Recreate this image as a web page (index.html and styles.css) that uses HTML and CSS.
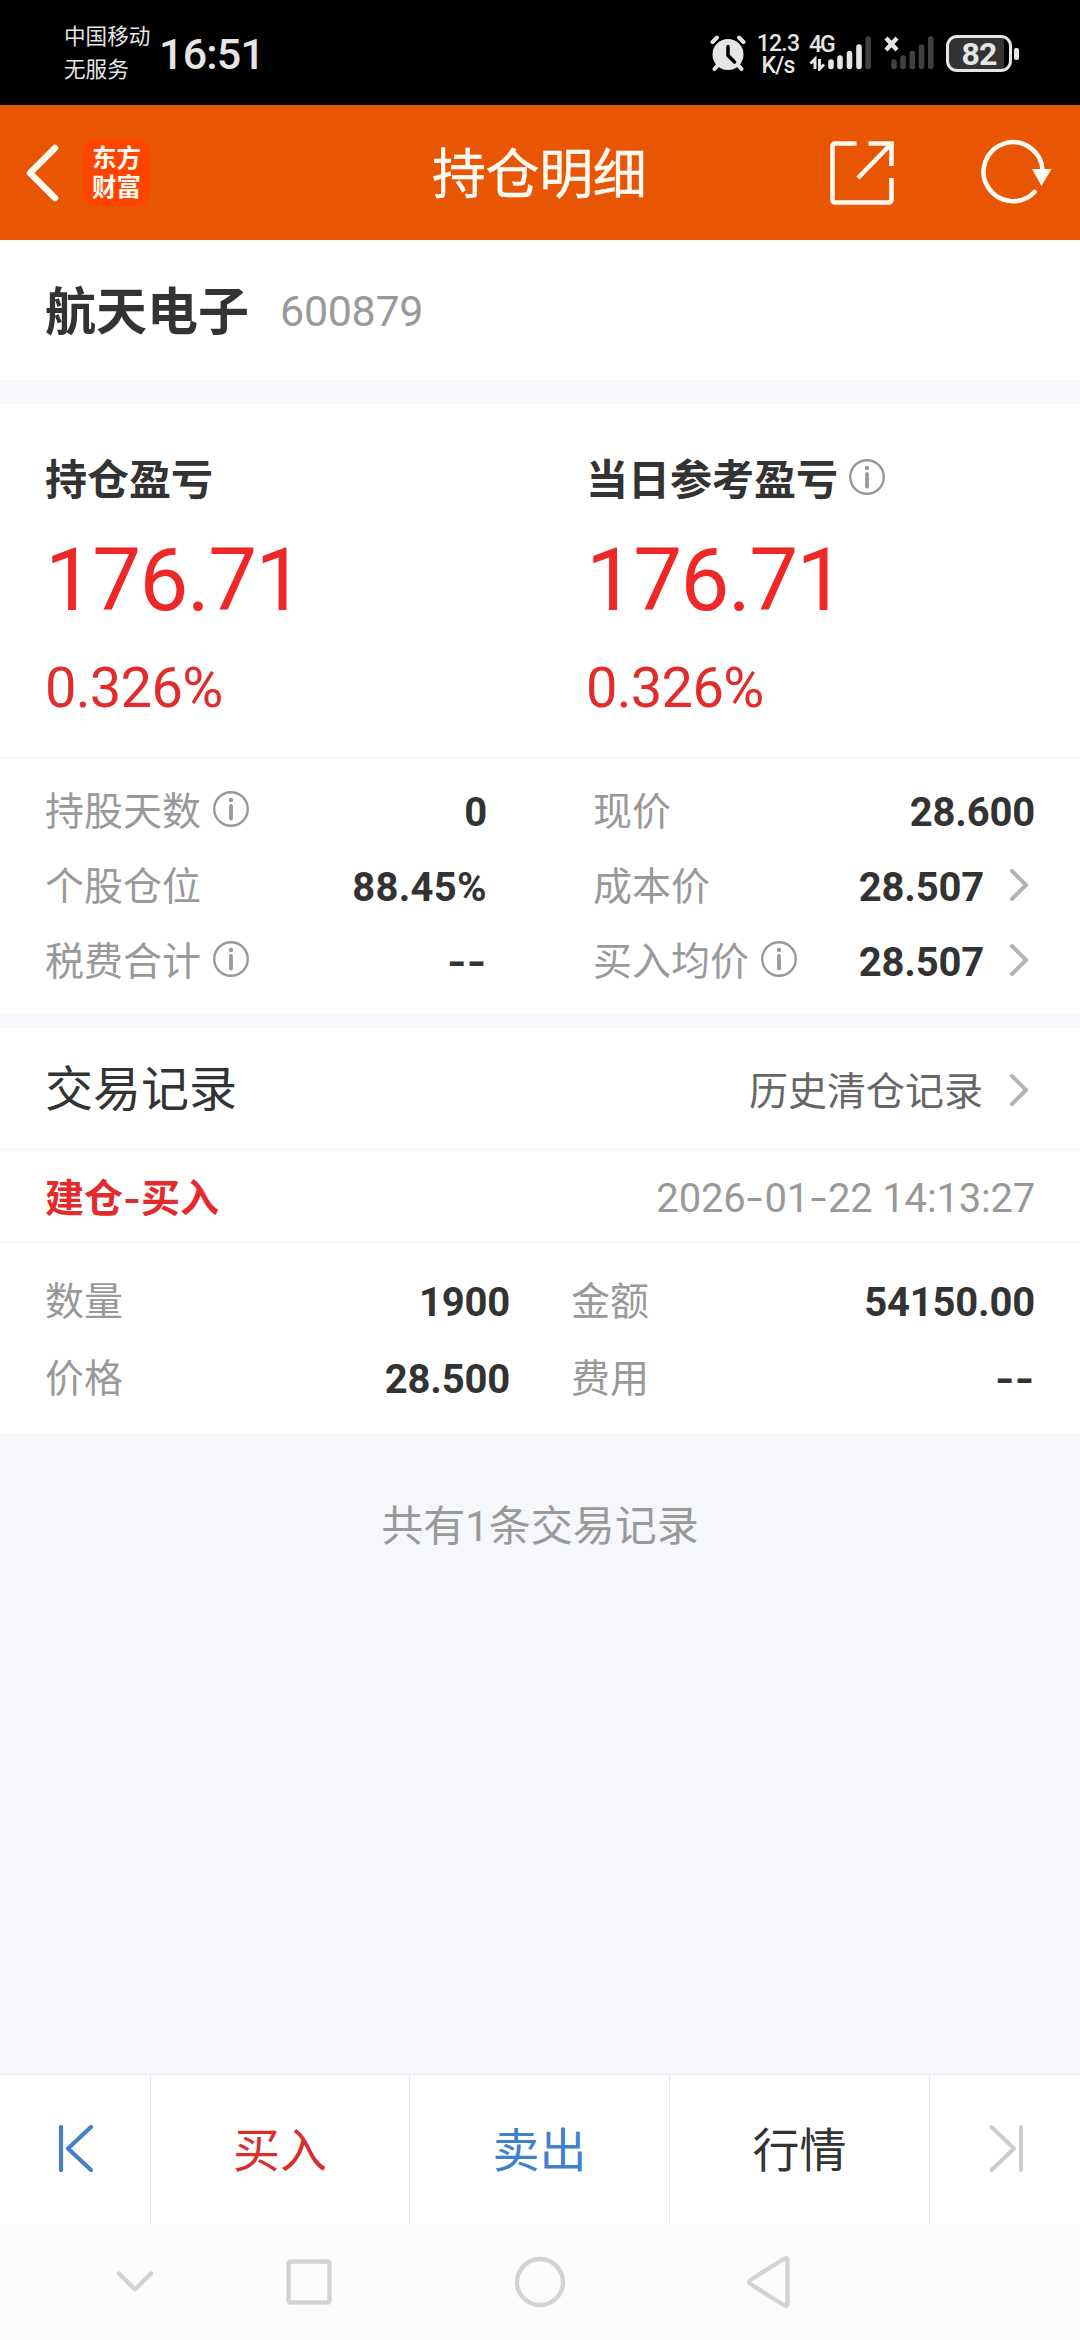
FILE: index.html
```html
<!DOCTYPE html>
<html lang="zh-CN">
<head>
<meta charset="utf-8">
<title>持仓明细</title>
<link rel="stylesheet" href="styles.css">
</head>
<body>
<svg class="defs" width="0" height="0" aria-hidden="true">
  <symbol id="info" viewBox="0 0 36 36"><circle cx="18" cy="18" r="16.8" fill="none" stroke="#999" stroke-width="2.4"/><circle cx="18" cy="9" r="2.2" fill="#999"/><path d="M18 15v12.5" stroke="#999" stroke-width="3.8" stroke-linecap="round"/></symbol>
  <symbol id="more" viewBox="0 0 20 34"><path d="M3 3l14 14L3 31" fill="none" stroke="#b3b3b3" stroke-width="4" stroke-linecap="round" stroke-linejoin="round"/></symbol>
</svg>

<div class="status">
  <div class="carrier"><span>中国移动</span><span>无服务</span></div>
  <div class="clock">16:51</div>
  <svg class="alarm" width="36" height="36" viewBox="0 0 36 36">
    <g stroke="#e5e5e5" stroke-width="4" stroke-linecap="round"><path d="M2.500 7l4.500-4.500M33.500 7L29 2.500M8 30l-3.500 4M28 30l3.500 4"/></g>
    <circle cx="18" cy="19.500" r="15.500" fill="#e5e5e5"/>
    <path d="M18 11.500v9l6.500 6.500" fill="none" stroke="#000" stroke-width="3.600" stroke-linecap="round" stroke-linejoin="round"/>
  </svg>
  <div class="speed"><span>12.3</span><span>K/s</span></div>
  <div class="cell">
    <span>4G</span>
    <svg width="62" height="36" viewBox="0 0 62 36">
      <path d="M6 34V24L1.500 28.500M10.500 24v10l4.500-4.500" fill="none" stroke="#e5e5e5" stroke-width="3"/>
      <g stroke-width="5.600" stroke-linecap="round"><path stroke="#e5e5e5" d="M22 27v4.500M31 23v8.500M40.500 18.500v13M50 12v19.500"/><path stroke="#404040" d="M59.200 4v27.500"/></g>
    </svg>
  </div>
  <svg class="nosim" width="50" height="36" viewBox="0 0 50 36">
    <path d="M2 3l11 12M13 3L2 15" stroke="#e5e5e5" stroke-width="4.400"/>
    <path d="M10 27v4.500M19 23v8.500M28.300 18.500v13M37.500 12v19.500M46.800 4v27.500" stroke="#404040" stroke-width="5.600" stroke-linecap="round"/>
  </svg>
  <div class="battery"><span>82</span></div>
  <div class="tip"></div>
</div>

<header class="header">
  <svg class="back" width="36" height="60" viewBox="0 0 36 60"><path d="M30 5L5 30l25 25" fill="none" stroke="#fffaf2" stroke-width="6.500" stroke-linecap="round" stroke-linejoin="round"/></svg>
  <div class="logo"><span>东方</span><span>财富</span></div>
  <h1 class="title">持仓明细</h1>
  <svg class="share" width="64" height="64" viewBox="0 0 64 64"><path d="M26.500 2.500H5a2.500 2.500 0 0 0-2.500 2.500v54A2.500 2.500 0 0 0 5 61.500h54a2.500 2.500 0 0 0 2.500-2.500V37M38.500 2.500h23V25M61 3L28 37" fill="none" stroke="#fffaf2" stroke-width="4.600"/></svg>
  <svg class="reload" width="72" height="66" viewBox="0 0 72 66"><path d="M61.600 32A29.500 29.500 0 1 0 53.500 53" fill="none" stroke="#fffaf2" stroke-width="4.600" stroke-linecap="round"/><path d="M51 30h19.500L60.500 47z" fill="#fffaf2"/></svg>
</header>

<section class="stock"><span class="name">航天电子</span><span class="code">600879</span></section>

<section class="profit">
  <div class="pl"><div class="pl-label">持仓盈亏</div><div class="pl-big">176.71</div><div class="pl-pct">0.326%</div></div>
  <div class="pl"><div class="pl-label">当日参考盈亏<svg width="36" height="36"><use href="#info"/></svg></div><div class="pl-big">176.71</div><div class="pl-pct">0.326%</div></div>
</section>

<section class="stats">
  <div class="row"><span class="label">持股天数<svg width="36" height="36"><use href="#info"/></svg></span><span class="val">0</span></div>
  <div class="row"><span class="label">现价</span><span class="val">28.600</span></div>
  <div class="row"><span class="label">个股仓位</span><span class="val percent">88.45%</span></div>
  <div class="row"><span class="label">成本价</span><span class="val">28.507</span><svg class="more" width="20" height="34"><use href="#more"/></svg></div>
  <div class="row"><span class="label">税费合计<svg width="36" height="36"><use href="#info"/></svg></span><span class="val dash">--</span></div>
  <div class="row"><span class="label">买入均价<svg width="36" height="36"><use href="#info"/></svg></span><span class="val">28.507</span><svg class="more" width="20" height="34"><use href="#more"/></svg></div>
</section>

<section class="records-head"><h2 class="records-title">交易记录</h2><span class="history">历史清仓记录</span><svg class="more" width="20" height="34"><use href="#more"/></svg></section>

<section class="record">
  <div class="record-top"><span class="kind">建仓<span class="hyphen">-</span>买入</span><span class="date">2026<span class="sep">-</span>01<span class="sep">-</span>22 14:13:27</span></div>
  <div class="record-grid">
    <div class="row"><span class="label">数量</span><span class="val">1900</span></div>
    <div class="row"><span class="label">金额</span><span class="val">54150.00</span></div>
    <div class="row"><span class="label">价格</span><span class="val">28.500</span></div>
    <div class="row"><span class="label">费用</span><span class="val dash">--</span></div>
  </div>
</section>

<p class="total">共有<span class="num">1</span>条交易记录</p>

<footer class="actions">
  <div class="act"><svg width="36" height="50" viewBox="0 0 36 50"><path d="M4 5v43M34 5L11 26.500 34 48" fill="none" stroke="#437fca" stroke-width="4.200" stroke-linecap="round" stroke-linejoin="round"/></svg></div>
  <div class="act buy">买入</div>
  <div class="act sell">卖出</div>
  <div class="act quote">行情</div>
  <div class="act last"><svg width="36" height="50" viewBox="0 0 36 50"><path d="M32 5v43M2.500 5L25 26.500 2.500 48" fill="none" stroke="#ccc" stroke-width="4" stroke-linecap="round" stroke-linejoin="round"/></svg></div>
</footer>

<nav class="sysnav">
  <svg width="1080" height="116" viewBox="0 0 1080 116" fill="none" stroke="#d3d3d3" stroke-width="4.400" stroke-linecap="round" stroke-linejoin="round">
    <path d="M119 49.500l16 16 16-16"/><rect x="288.500" y="37.500" width="41" height="41" rx="2"/><circle cx="540" cy="58" r="23"/><path d="M787.500 36q0-3-3-1.500L750.500 56q-3 2 0 4l34 21.500q3 1.500 3-1.500z"/>
  </svg>
</nav>
</body>
</html>
```

FILE: styles.css
```css
* { box-sizing: border-box; margin: 0; padding: 0; }
body { width: 1080px; height: 2340px; display: flex; flex-direction: column; overflow: hidden; background: #f6f7fa; color: #333; font-family: "Noto Sans CJK SC", sans-serif; }
svg { flex: none; display: block; }
.defs { position: absolute; }

.status { height: 105px; flex: none; background: #000; color: #e5e5e5; display: flex; align-items: flex-start; font-family: Roboto, "Noto Sans CJK SC", sans-serif; }
.carrier { width: 90px; margin: 18px 0 0 64px; display: flex; flex-direction: column; font: 21.6px/33px "Noto Sans CJK SC", sans-serif; }
.clock { width: 105px; margin: 28px 0 0 5px; font-size: 43px; line-height: 52px; font-weight: 500; letter-spacing: -0.8px; }
.alarm { margin: 35px 0 0 446px; }
.speed { width: 42px; margin: 33px 0 0 11px; display: flex; flex-direction: column; align-items: center; font-size: 23px; line-height: 21.5px; font-weight: 500; letter-spacing: -0.8px; }
.cell { position: relative; width: 62px; margin: 35px 0 0 10px; }
.cell span { position: absolute; left: 0; top: -2px; font-size: 23px; line-height: 24px; font-weight: 500; letter-spacing: -2px; }
.nosim { margin: 35px 0 0 13px; }
.battery { width: 66px; height: 37px; margin: 35px 0 0 12px; border: 3px solid #e5e5e5; border-radius: 11px; background: linear-gradient(90deg, #333 55px, #000 55px); font-size: 32px; line-height: 32px; font-weight: 700; text-align: center; letter-spacing: -0.8px; }
.tip { width: 5px; height: 12px; margin: 48px 0 0 2px; border-radius: 2px; background: #e5e5e5; }

.header { height: 135px; flex: none; background: #e85503; color: #fffaf2; display: flex; align-items: center; }
.back { margin-left: 25px; }
.logo { width: 67px; height: 67px; margin-left: 22px; border-radius: 13px; background: #ff4400; display: flex; flex-direction: column; align-items: center; justify-content: center; font-size: 24.5px; line-height: 29px; font-weight: 700; padding-bottom: 3px; }
.title { width: 216px; margin-left: 282px; font-size: 54px; line-height: 60px; font-weight: 400; -webkit-text-stroke: 0.4px; letter-spacing: -0.4px; margin-bottom: 3px; }
.share { margin-left: 182px; }
.reload { margin-left: 87px; margin-bottom: 1px; }

.stock { height: 140px; flex: none; background: #fff; display: flex; padding: 0 45px; }
.name { font-size: 51px; line-height: 136px; font-weight: 700; }
.code { margin-left: 31px; color: #999; font: 43px/143px Roboto, sans-serif; letter-spacing: -0.3px; }

.profit { height: 354px; flex: none; margin-top: 24px; background: #fff; border-bottom: 1px solid #f4f4f6; padding: 41px 0 0 45px; display: grid; grid-template-columns: 541px 1fr; }
.pl-label { height: 64px; display: flex; align-items: center; gap: 11px; font-size: 42px; line-height: 64px; font-weight: 700; }
.pl-big { margin-top: 16px; height: 110px; color: #ee2727; font: 87px/110px Roboto, sans-serif; letter-spacing: -1.6px; }
.pl-pct { margin-top: 18px; color: #e22c2c; font: 56px/70px Roboto, sans-serif; letter-spacing: -0.7px; }

.stats { height: 255px; flex: none; background: #fff; padding: 14px 45px 0; display: grid; grid-template-columns: 442px 442px; column-gap: 106px; grid-auto-rows: 75px; }
.row { display: flex; align-items: center; }
.label { display: flex; align-items: center; gap: 12px; color: #999; font-size: 39px; line-height: 60px; white-space: nowrap; margin-top: -4px; }
.label svg { margin-top: 3px; }
.val { margin-left: auto; font: 700 40px/60px Roboto, sans-serif; margin-top: 7px; letter-spacing: -0.2px; }
.percent { letter-spacing: 0.3px; }
.dash { letter-spacing: 0; transform: scaleX(1.25); transform-origin: right; }
.more { margin: 0 6px 0 25px; }

.records-head { height: 124px; flex: none; margin-top: 15px; background: #fff; border-bottom: 4px solid #f7f7f8; padding: 0 45px; display: flex; align-items: center; }
.records-title { font-size: 48px; line-height: 60px; font-weight: 400; margin-top: -7px; }
.history { margin-left: auto; color: #666; font-size: 39px; line-height: 60px; margin-top: 0; }
.records-head .more { margin-top: 4px; margin-left: 26px; }

.record { height: 281px; flex: none; background: #fff; }
.record-top { height: 91px; padding: 0 45px; border-bottom: 1px solid #f4f4f6; display: flex; justify-content: space-between; }
.kind { color: #e32b2b; font-size: 39px; line-height: 86px; font-weight: 700; }
.hyphen { display: inline-block; width: 18px; transform: scaleX(1.2); text-align: center; }
.date { color: #999; font: 40px/93px Roboto, sans-serif; letter-spacing: -0.2px; }
.sep { display: inline-block; width: 19px; text-align: center; transform: scaleX(1.45); }
.record-grid { padding: 18px 45px 0; display: grid; grid-template-columns: 465px 464px; column-gap: 61px; grid-auto-rows: 77px; }

.total { flex: 1; text-align: center; color: #999; font-size: 42px; line-height: 60px; padding-top: 60px; }
.num { font-family: Roboto, sans-serif; }

.actions { height: 150px; flex: none; background: #fff; border-top: 1px solid #ebebed; display: grid; grid-template-columns: 151px 259px 260px 260px 150px; }
.act { display: flex; align-items: center; justify-content: center; font-size: 47px; padding-bottom: 6px; border-right: 1px solid #ebebed; }
.act.last { border-right: 0; padding-left: 3px; }
.buy { color: #d82e2e; }
.sell { color: #3f80d0; }
.sysnav { height: 116px; flex: none; background: #fcfcfc; }
```
